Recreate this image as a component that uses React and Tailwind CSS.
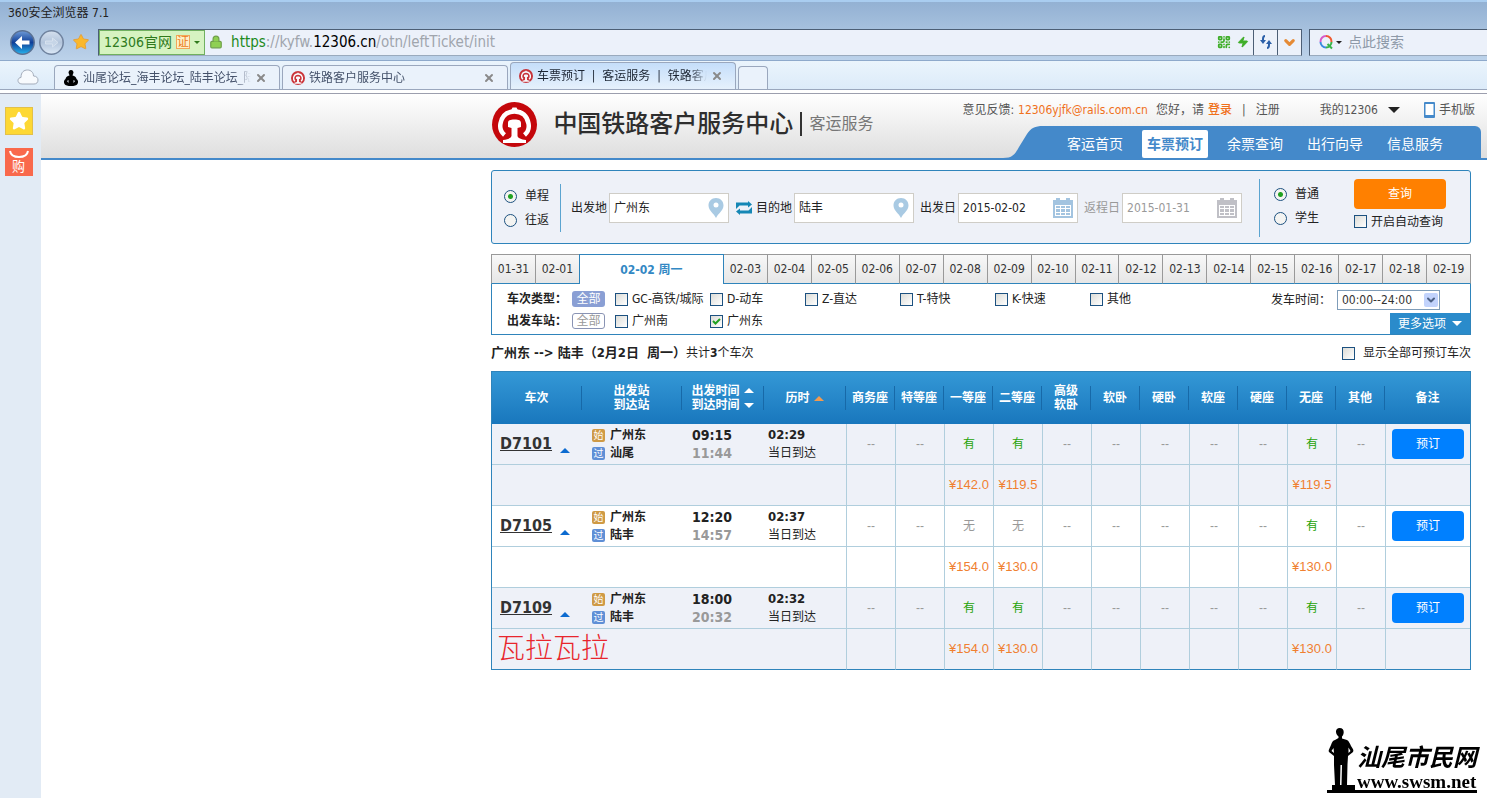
import { ChevronDown, Lock, QrCode, Star, X, Zap } from "lucide-react";

const dates = [
  "01-31", "02-01", "02-02 周一", "02-03", "02-04", "02-05", "02-06", "02-07", "02-08", "02-09",
  "02-10", "02-11", "02-12", "02-13", "02-14", "02-15", "02-16", "02-17", "02-18", "02-19",
];

const trainTypes = ["GC-高铁/城际", "D-动车", "Z-直达", "T-特快", "K-快速", "其他"];

const seats = ["商务座", "特等座", "一等座", "二等座", "高级软卧", "软卧", "硬卧", "软座", "硬座", "无座", "其他"];

const trains = [
  {
    code: "D7101", from: "广州东", to: "汕尾", depart: "09:15", arrive: "11:44", duration: "02:29",
    status: { 2: "有", 3: "有", 9: "有" },
    prices: { 2: "¥142.0", 3: "¥119.5", 9: "¥119.5" },
  },
  {
    code: "D7105", from: "广州东", to: "陆丰", depart: "12:20", arrive: "14:57", duration: "02:37",
    status: { 2: "无", 3: "无", 9: "有" },
    prices: { 2: "¥154.0", 3: "¥130.0", 9: "¥130.0" },
  },
  {
    code: "D7109", from: "广州东", to: "陆丰", depart: "18:00", arrive: "20:32", duration: "02:32",
    status: { 2: "有", 3: "有", 9: "有" },
    prices: { 2: "¥154.0", 3: "¥130.0", 9: "¥130.0" },
    note: "瓦拉瓦拉",
  },
];

function Triangle({ down, className }) {
  return (
    <svg viewBox="0 0 10 5" className={className} fill="currentColor" aria-hidden="true">
      <path d={down ? "M0 0H10L5 5Z" : "M0 5H10L5 0Z"} />
    </svg>
  );
}

function RailLogo({ className }) {
  return (
    <svg viewBox="0 0 45 45" className={className} aria-hidden="true">
      <circle cx="22.5" cy="22.5" r="22.5" fill="#c4070b" />
      <path
        d="M12.5 33C9 30 7.500 26.500 8.500 21.500C10 13.500 15 9.500 22.500 9.500S35 13.500 36.500 21.500C37.500 26.500 36 30 32.500 33"
        fill="none"
        stroke="#fff"
        strokeWidth="4.5"
      />
      <path d="M19 8.500L20.500 5.500H24.500L26 8.500Z" fill="#fff" />
      <path
        d="M16 25V21C16 18.500 18 17.500 22.500 17.500S29 18.500 29 21V25L25.500 26V34C26 36 29 37.500 34 38V41H11V38C16 37.500 19 36 19.500 34V26Z"
        fill="#fff"
      />
    </svg>
  );
}

function CheckBox({ id, label, checked, className = "" }) {
  return (
    <label htmlFor={id} className={`flex items-center gap-1 whitespace-nowrap ${className}`}>
      <span className="relative flex">
        <input
          id={id}
          type="checkbox"
          defaultChecked={checked}
          className="peer size-[13px] appearance-none border border-[#1c5180] bg-linear-to-br from-[#dcdcd7] to-white"
        />
        <svg
          viewBox="0 0 13 13"
          className="pointer-events-none absolute inset-0 hidden peer-checked:block"
          fill="none"
          stroke="#21a121"
          strokeWidth="2"
        >
          <path d="M3 6L5.500 8.500L10 4" />
        </svg>
      </span>
      {label}
    </label>
  );
}

function Radio({ id, name, label, checked }) {
  return (
    <label htmlFor={id} className="flex items-center gap-2">
      <input
        id={id}
        type="radio"
        name={name}
        defaultChecked={checked}
        className="size-[13px] appearance-none rounded-full border border-[#1c5180] bg-[#f4f4f2] checked:bg-[radial-gradient(circle,#21a121_2px,#f4f4f2_3px)]"
      />
      {label}
    </label>
  );
}

function PinIcon() {
  return (
    <svg viewBox="0 0 16 20" className="h-5 w-4 shrink-0" aria-hidden="true">
      <path
        d="M8 0C3.500 0 .5 3.200 .5 7.500C.5 12.500 6 15.500 8 20C10 15.500 15.500 12.500 15.500 7.500C15.500 3.200 12.500 0 8 0Z"
        fill="#a9cae3"
      />
      <circle cx="8" cy="7" r="2.500" fill="#fff" />
    </svg>
  );
}

function CalendarIcon({ className }) {
  return (
    <svg viewBox="0 0 20 20" className={`h-5 w-5 shrink-0 ${className}`} fill="currentColor" aria-hidden="true">
      <path d="M0 2H3V0H7V2H13V0H17V2H20V20H0Z" />
      <path d="M2 7H18V18H2Z" fill="#fff" />
      <path d="M3 8h4v2H3zM8 8h4v2H8zM13 8h4v2h-4zM3 11h4v3H3zM8 11h4v3H8zM13 11h4v3h-4zM3 15h4v2H3zM8 15h4v2H8zM13 15h4v2h-4z" />
    </svg>
  );
}

function Field({ id, label, value, muted, icon, className = "" }) {
  return (
    <div className={`flex items-center gap-0.5 ${muted ? "text-[#999]" : ""} ${className}`}>
      <label htmlFor={id} className="whitespace-nowrap">{label}</label>
      <div className="flex h-[30px] w-[120px] items-center border border-[#cfcdc7] bg-white pr-1 pl-1">
        <input id={id} defaultValue={value} className="w-full min-w-0 outline-none" />
        {icon}
      </div>
    </div>
  );
}

function BrowserTab({ icon, title, active }) {
  return (
    <div
      className={`flex w-[226px] items-center gap-1 rounded-t border border-b-0 border-[#9aa7bd] px-2 ${
        active ? "h-[27px] bg-linear-to-b from-[#c5defa] to-[#e6f1fc] text-[#1c2533]" : "h-6 bg-[#eaf2fb] text-[#44516a]"
      }`}
    >
      {icon}
      <span className="flex-1 overflow-hidden mask-r-from-90% whitespace-pre">{title}</span>
      <button aria-label="关闭标签" className="mr-1">
        <X className="size-3 text-[#8a8a8a]" strokeWidth={4} />
      </button>
    </div>
  );
}

function BrowserChrome() {
  return (
    <div>
      <div className="border-t-2 border-[#a9cdf0] bg-linear-to-b from-[#93b1d3] to-[#bcd2ea] pb-1">
        <div className="flex h-[26px] items-center px-2 pb-1 text-[#222]">360安全浏览器 7.1</div>
        <div className="flex h-7 items-center">
          <div className="mr-1.5 ml-2.5 flex items-center gap-1">
            <button aria-label="后退" className="size-[25px]">
              <svg viewBox="0 0 25 25">
                <defs>
                  <linearGradient id="back" x2="0" y2="1">
                    <stop stopColor="#6f9bd8" />
                    <stop offset=".5" stopColor="#0f3f98" />
                    <stop offset="1" stopColor="#27b4ee" />
                  </linearGradient>
                  <linearGradient id="forward" x2="0" y2="1">
                    <stop stopColor="#d5e0ee" />
                    <stop offset=".5" stopColor="#b3c5dc" />
                    <stop offset="1" stopColor="#dce9f7" />
                  </linearGradient>
                </defs>
                <circle cx="12.5" cy="12.5" r="11.7" fill="url(#back)" stroke="#5a7194" strokeWidth="1.500" />
                <path d="M5 12.500L12 6V10.500H19.500V14.500H12V19Z" fill="#fff" />
              </svg>
            </button>
            <button aria-label="前进" className="size-[25px]">
              <svg viewBox="0 0 25 25">
                <circle cx="12.5" cy="12.5" r="11.7" fill="url(#forward)" stroke="#70839f" strokeWidth="1.500" />
                <path d="M19 12.500L13.500 8V11H6.500V14H13.500V17Z" fill="#c6d5e7" stroke="#d7e2ef" />
              </svg>
            </button>
          </div>
          <button aria-label="收藏" className="mr-2 ml-0.5">
            <Star className="size-[18px] fill-[#fbb82c] text-[#e6982a]" strokeWidth={1} />
          </button>
          <div className="flex h-[27px] flex-1 items-center border border-t-[#4c5e75] border-r-[#4c5e75] border-b-[#9aaabd] border-l-[#4c5e75] bg-[#ecf1fa]">
            <button className="flex h-full items-center gap-1 border border-[#70b060] bg-[#d6f3c1] px-1 text-[14px] whitespace-nowrap text-[#2f7a1d]">
              12306官网
              <span className="border border-[#f2a65a] bg-[#fdf0c8] text-[12px] leading-3 text-[#ec7c1c]">证</span>
              <Triangle down className="h-[3px] w-1.5" />
            </button>
            <Lock className="mx-1 size-[14px] fill-[#8fd052] text-[#6f9f4a]" strokeWidth={2} />
            <span className="ml-1 flex-1 text-[15px] text-[#a0a5ad]">
              <span className="text-[#1d8a1d]">https</span>://kyfw.<span className="text-black">12306.cn</span>/otn/leftTicket/init
            </span>
            <QrCode className="mr-1.5 size-[14px] text-[#3fae29]" strokeWidth={3} />
            <Zap className="mr-1 size-3 fill-[#3fae29] text-[#3fae29]" />
            <button aria-label="刷新" className="flex h-full w-6 items-center justify-center border-l border-[#4c5e75]">
              <svg viewBox="0 0 14 14" className="size-[14px]" fill="none" stroke="#2b5fa8" strokeWidth="2">
                <path d="M6 1Q4 1 4 4V6M8 13Q10 13 10 10V8" />
                <path d="M1 5H7L4 9ZM7 9H13L10 5Z" fill="#2b5fa8" stroke="none" />
              </svg>
            </button>
            <button aria-label="展开" className="flex h-full w-6 items-center justify-center border-l border-[#4c5e75]">
              <ChevronDown className="size-[15px] text-[#e58a35]" strokeWidth={5} />
            </button>
          </div>
          <div className="ml-[7px] flex h-[27px] w-[178px] items-center border border-r-0 border-t-[#4c5e75] border-b-[#9aaabd] border-l-[#4c5e75] bg-[#ecf1fa] pl-2">
            <svg viewBox="0 0 16 16" className="size-4 shrink-0" fill="none" strokeWidth="2">
              <path d="M8 2A5.500 5.500 0 0 1 13.500 8" stroke="#ef5a30" />
              <path d="M8 2A5.500 5.500 0 0 0 2.500 8" stroke="#d65bc8" />
              <path d="M2.500 8A5.500 5.500 0 0 0 8 13.500" stroke="#3a8be0" />
              <path d="M13.500 8A5.500 5.500 0 0 1 8 13.500M9.500 10L14 14.500" stroke="#39b54a" />
            </svg>
            <Triangle down className="mr-1.5 ml-0.5 h-[3px] w-1.5 shrink-0" />
            <input aria-label="搜索" placeholder="点此搜索" className="w-full min-w-0 text-[14px] outline-none placeholder:text-[#8e99a8]" />
          </div>
        </div>
      </div>
      <div className="flex h-[30px] items-end border-t border-b border-t-[#8ea9cb] border-b-[#9aa7bd] bg-linear-to-b from-[#eaf4fc] to-[#dcebf9]">
        <div className="w-[54px] shrink-0 pb-1 pl-[17px]">
          <svg viewBox="0 0 22 16" className="h-4 w-[22px]" fill="#f7fafd" stroke="#a3acba" aria-hidden="true">
            <path d="M5 15C2 15 1 13 1 11.500C1 9.500 2.500 8.500 4 8.500C4 3 7 1 10.500 1C14 1 16.500 3.500 16.500 7C19.500 7 21 9 21 11C21 13.500 19.500 15 17 15Z" />
          </svg>
        </div>
        <div className="flex items-end gap-0.5">
          <BrowserTab
            title="汕尾论坛_海丰论坛_陆丰论坛_陆"
            icon={
              <svg viewBox="0 0 16 16" className="size-4 shrink-0">
                <path
                  d="M8 0A2.500 2.500 0 0 1 10 4L9.500 5.500Q13 6 13.500 9Q16 11 14.500 14Q13 16 8 16T1.500 14Q0 11 2.500 9Q3 6 6.500 5.500L6 4A2.500 2.500 0 0 1 8 0Z"
                  fill="#000"
                />
                <path d="M4 11L5.500 10V13ZM12 11L10.500 10V13Z" fill="#eaf2fb" />
              </svg>
            }
          />
          <BrowserTab title="铁路客户服务中心" icon={<RailLogo className="size-[14px] shrink-0 opacity-80" />} />
          <BrowserTab
            active
            title="车票预订  |  客运服务  |  铁路客户"
            icon={<RailLogo className="size-[14px] shrink-0 opacity-80" />}
          />
          <button aria-label="新标签" className="h-[23px] w-[30px] rounded-t border border-b-0 border-[#9aa7bd] bg-[#eaf2fb]" />
        </div>
      </div>
      <div className="h-1 border-b border-[#9c9fae] bg-white" />
    </div>
  );
}

function SiteHeader() {
  return (
    <header className="flex justify-between border-b-2 border-[#4489ca] bg-linear-to-b from-white to-[#dedede]">
      <div className="ml-auto flex w-[470px] items-center pb-1">
        <RailLogo className="mr-4 size-[45px] shrink-0" />
        <h1 className="text-[24px] font-medium whitespace-nowrap text-[#2e2e2e]">中国铁路客户服务中心</h1>
        <span className="mx-[7px] h-6 border-l-2 border-[#333]" />
        <span className="text-[16px] whitespace-nowrap text-[#777]">客运服务</span>
      </div>
      <div className="flex flex-col items-end">
        <div className="flex h-8 items-center pr-3 whitespace-nowrap text-[#555]">
          意见反馈:
          <a href="#mail" className="ml-1 text-[#f0711c]">12306yjfk@rails.com.cn</a>
          <span className="ml-2">您好，请</span>
          <a href="#login" className="ml-1 font-medium text-[#f0711c]">登录</a>
          <span className="mx-2.5">|</span>
          <a href="#register">注册</a>
          <button className="ml-10 flex items-center gap-2.5">
            我的12306
            <Triangle down className="h-1.5 w-3 text-[#222]" />
          </button>
          <a href="#mobile" className="ml-6 flex items-center gap-1">
            <svg viewBox="0 0 11 16" className="h-4 w-[11px]">
              <rect width="11" height="16" rx="1" fill="#4489ca" />
              <path d="M1.500 2H9.500V13H1.500Z" fill="#fff" />
            </svg>
            手机版
          </a>
        </div>
        <div className="mr-1.5 flex">
          <svg viewBox="0 0 40 32" className="h-8 w-10" fill="#4489ca" aria-hidden="true">
            <path d="M0 32C10 32 12 28 16 21L24 8C28 2 32 0 40 0V32Z" />
          </svg>
          <nav className="-ml-px flex h-8 items-end rounded-tr-md bg-[#4489ca] pr-[26px] pl-[13px] text-[14px] leading-7 text-white">
            <a href="#home" className="w-20 text-center">客运首页</a>
            <span className="flex w-20 justify-center">
              <a href="#booking" className="w-[66px] rounded-xs bg-white text-center font-bold text-[#4489ca]">
                车票预订
              </a>
            </span>
            <a href="#remaining" className="w-20 text-center">余票查询</a>
            <a href="#guide" className="w-20 text-center">出行向导</a>
            <a href="#info" className="w-20 text-center">信息服务</a>
          </nav>
        </div>
      </div>
    </header>
  );
}

function SearchPanel() {
  return (
    <form className="flex h-[74px] items-center rounded-[3px] border border-[#2f84bb] bg-[#eef1f8] pt-0.5 pl-3">
      <div className="flex flex-col gap-1.5 leading-[18px]">
        <Radio id="one-way" name="trip" label="单程" checked />
        <Radio id="round" name="trip" label="往返" />
      </div>
      <div className="mr-2.5 ml-[11px] h-12 border-l border-[#5ba4d0]" />
      <Field id="from" label="出发地" value="广州东" icon={<PinIcon />} />
      <button type="button" aria-label="交换" className="mr-1 ml-[7px]">
        <svg viewBox="0 0 16 14" className="h-[14px] w-4" fill="#1587b5">
          <path d="M0 8V1.500H12V0L16 3.500L12 6.500V4.500H3.500L0 8ZM16 6V12.500H4V14L0 10.500L4 7.500V9.500H12.500L16 6Z" />
        </svg>
      </button>
      <Field id="to" label="目的地" value="陆丰" icon={<PinIcon />} />
      <Field id="depart" label="出发日" value="2015-02-02" className="ml-1.5" icon={<CalendarIcon className="text-[#a3c4e0]" />} />
      <Field id="return" label="返程日" value="2015-01-31" className="ml-1.5" muted icon={<CalendarIcon className="text-[#c0c0c6]" />} />
      <div className="mr-3.5 ml-auto h-[58px] border-l border-[#5ba4d0]" />
      <div className="flex flex-col gap-1.5 pb-1 leading-[18px]">
        <Radio id="normal" name="passenger" label="普通" checked />
        <Radio id="student" name="passenger" label="学生" />
      </div>
      <div className="mr-6 ml-[35px] flex flex-col gap-[5px] pb-2">
        <button type="button" className="h-[30px] w-[92px] rounded bg-[#ff8000] text-white">查询</button>
        <CheckBox id="auto" label="开启自动查询" />
      </div>
    </form>
  );
}

function DateTabs() {
  return (
    <div className="flex text-[#333]">
      {dates.map((date, i) => (
        <button
          key={date}
          className={
            i === 2
              ? "h-[30px] w-[145px] border-t border-r border-l border-[#2f84bb] bg-white font-bold text-[#3388c4]"
              : `h-[30px] min-w-0 flex-1 border-t border-b border-t-[#999] border-b-[#2f84bb] bg-linear-to-b from-[#f8f8f8] to-[#e6e6e6] ${
                  i === 3 ? "" : "border-l border-l-[#999]"
                } ${i === dates.length - 1 ? "border-r border-r-[#999]" : ""}`
          }
        >
          {date}
        </button>
      ))}
    </div>
  );
}

function Filters() {
  return (
    <div className="flex justify-between border border-t-0 border-[#2f84bb]">
      <div className="flex flex-col gap-1 pt-[6px] pl-[15px]">
        <div className="flex h-[18px] items-center">
          <span className="w-[65px] font-bold whitespace-nowrap">车次类型：</span>
          <button className="mr-2.5 h-4 w-[33px] rounded-[3px] bg-[#8a9fd4] leading-4 text-white">全部</button>
          {trainTypes.map((type, i) => (
            <CheckBox key={type} id={`type-${i}`} label={type} className="w-[95px]" />
          ))}
        </div>
        <div className="flex h-[18px] items-center">
          <span className="w-[65px] font-bold whitespace-nowrap">出发车站：</span>
          <button className="mr-2.5 h-4 w-[33px] rounded-[3px] border border-[#8a94b4] leading-[14px] text-[#999]">全部</button>
          <CheckBox id="gz-south" label="广州南" className="w-[95px]" />
          <CheckBox id="gz-east" label="广州东" className="w-[95px]" checked />
        </div>
      </div>
      <div className="flex flex-col items-end gap-[3px] pt-[6px]">
        <div className="flex items-center pr-[30px]">
          <label htmlFor="time" className="mr-1.5 whitespace-nowrap">发车时间：</label>
          <div className="relative">
            <select
              id="time"
              className="block h-5 w-[103px] appearance-none border border-[#7f9db9] bg-white pl-1 text-[#333]"
            >
              <option>00:00--24:00</option>
              <option>00:00--06:00</option>
              <option>06:00--12:00</option>
              <option>12:00--18:00</option>
              <option>18:00--24:00</option>
            </select>
            <span className="pointer-events-none absolute top-[3px] right-0.5 flex h-[14px] w-[14px] items-center justify-center rounded-xs bg-[#c2d3fc]">
              <ChevronDown className="size-3 text-[#4d6185]" strokeWidth={4} />
            </span>
          </div>
        </div>
        <button className="flex h-[21px] w-20 items-center justify-center gap-1.5 bg-[#2a8bcb] text-white">
          更多选项
          <Triangle down className="h-[5px] w-2.5" />
        </button>
      </div>
    </div>
  );
}

function HeadCell({ children, last }) {
  return (
    <th className="h-[52px] p-0">
      <div className={`flex h-6 items-center justify-center gap-1 leading-[14px] ${last ? "" : "border-r border-[#1769a8]"}`}>
        {children}
      </div>
    </th>
  );
}

function SeatStatus({ value }) {
  if (!value) return <span className="font-['Liberation_Sans',sans-serif] text-[#999]">--</span>;
  return <span className={value === "有" ? "text-[#26a306]" : "text-[#999]"}>{value}</span>;
}

function TrainRows({ train, striped, last }) {
  const bg = striped ? "bg-[#eef1f8]" : "bg-white";
  const cell = "border-b border-l border-[#b0cedd] p-0 text-center";
  const edge = last ? "border-b-[#2f84bb]" : "";

  return (
    <tbody className={bg}>
      <tr className="h-[41px]">
        <td className="border-b border-[#b0cedd] p-0 pl-2">
          <div className="flex items-end gap-2">
            <a href={`#${train.code}`} className="text-[16px] leading-5 font-bold text-[#333] underline">{train.code}</a>
            <Triangle className="mb-px h-[5px] w-2.5 text-[#0c6bd0]" />
          </div>
        </td>
        <td className="border-b border-[#b0cedd] p-0 pl-2.5 leading-[18px] font-bold">
          <div className="flex items-center gap-[5px]">
            <span className="size-[13px] rounded-xs bg-[#cf9a45] text-center text-[10px] leading-[13px] font-normal text-white">始</span>
            {train.from}
          </div>
          <div className="flex items-center gap-[5px]">
            <span className="size-[13px] rounded-xs bg-[#5f8fd6] text-center text-[10px] leading-[13px] font-normal text-white">过</span>
            {train.to}
          </div>
        </td>
        <td className="border-b border-[#b0cedd] p-0 pl-2.5 text-[14px] leading-[18px] font-bold">
          <div>{train.depart}</div>
          <div className="text-[#999]">{train.arrive}</div>
        </td>
        <td className="border-b border-[#b0cedd] p-0 pl-1 leading-[18px]">
          <div className="text-[13px] font-bold">{train.duration}</div>
          <div>当日到达</div>
        </td>
        {seats.map((seat, i) => (
          <td key={seat} className={cell}>
            <SeatStatus value={train.status[i]} />
          </td>
        ))}
        <td className={cell}>
          <button className="mx-auto block h-[30px] w-[72px] rounded bg-[#0080ff] text-white">预订</button>
        </td>
      </tr>
      <tr className="h-[41px]">
        <td colSpan={4} className={`border-b border-[#b0cedd] p-0 pl-[5px] text-[28px] leading-9 font-light text-[#e8262d] ${edge}`}>
          {train.note}
        </td>
        {seats.map((seat, i) => (
          <td key={seat} className={`${cell} ${edge} font-['Liberation_Sans',sans-serif] text-[13px] text-[#f08030]`}>
            {train.prices[i]}
          </td>
        ))}
        <td className={`${cell} ${edge}`} />
      </tr>
    </tbody>
  );
}

function TrainTable() {
  return (
    <table className="w-full table-fixed border-separate border-spacing-0 border border-b-0 border-[#2f84bb]">
      <colgroup>
        <col className="w-[90px]" />
        <col className="w-[100px]" />
        <col className="w-[82px]" />
        <col className="w-[82px]" />
        {seats.map((seat) => (
          <col key={seat} className="w-[49px]" />
        ))}
        <col />
      </colgroup>
      <thead className="bg-linear-to-b from-[#3498d6] to-[#1877bd] text-white">
        <tr>
          <HeadCell>车次</HeadCell>
          <HeadCell>出发站<br />到达站</HeadCell>
          <HeadCell>
            <span>出发时间<br />到达时间</span>
            <span className="flex flex-col gap-2.5">
              <Triangle className="h-[5px] w-2.5" />
              <Triangle down className="h-[5px] w-2.5" />
            </span>
          </HeadCell>
          <HeadCell>
            历时
            <Triangle className="h-[5px] w-2.5 text-[#f39a4e]" />
          </HeadCell>
          {seats.map((seat) => (
            <HeadCell key={seat}>
              {seat.length === 4 ? <span>{seat.slice(0, 2)}<br />{seat.slice(2)}</span> : seat}
            </HeadCell>
          ))}
          <HeadCell last>备注</HeadCell>
        </tr>
      </thead>
      {trains.map((train, i) => (
        <TrainRows key={train.code} train={train} striped={i % 2 === 0} last={i === trains.length - 1} />
      ))}
    </table>
  );
}

function Watermark() {
  return (
    <div className="fixed right-2.5 bottom-[5px] flex items-end border-b-[3px] border-black text-black">
      <svg viewBox="0 0 30 63" className="h-[63px] w-[30px]" aria-hidden="true">
        <path
          fillRule="evenodd"
          d="M12.500 1C15.500 1 17 3 16.700 5.500C16.500 8 15.500 9 15 9.500V11.500L20 13C22 14 23 17 24 19C26 22 27 23 26 25L21 29L20.500 37L20 58H28V63H5V58H8L7 38V29L2 25C1 23 3 21 4 18C5 15 6 13.500 8 13L11.500 11V9.500C9.500 8 9 6 9 4.500C9 2.500 10.500 1 12.500 1ZM6.500 21L4.500 24L7 26ZM21.500 20.500V26L23.500 24ZM13.500 38L13 58H14.500L15 38Z"
        />
      </svg>
      <div>
        <div className="text-[24px] leading-6 font-bold italic">汕尾市民网</div>
        <div className="pt-1 font-['Liberation_Serif',serif] text-[19px] leading-4 font-bold">www.swsm.net</div>
      </div>
    </div>
  );
}

export default function App() {
  return (
    <div className="flex min-h-screen flex-col bg-white font-['DejaVu_Sans_Condensed','Noto_Sans_CJK_SC',sans-serif] text-[12px] leading-4 text-[#222]">
      <BrowserChrome />
      <div className="flex flex-1">
        <aside className="flex w-[41px] shrink-0 flex-col items-center gap-[13px] bg-[#e2ebf5] pt-[13px] pr-1">
          <button aria-label="收藏夹" className="flex size-7 items-center justify-center border border-[#e2c04a] bg-[#fdd835]">
            <Star className="size-5 fill-white text-white" />
          </button>
          <button aria-label="购物" className="relative size-7 bg-[#f9694c] pt-2.5 text-[13px] text-white">
            购
            <svg viewBox="0 0 28 12" className="absolute inset-x-0 top-0" fill="none" stroke="#fff" strokeWidth="2">
              <path d="M5 3Q6 9 14 9T23 3" />
            </svg>
          </button>
        </aside>
        <div className="min-w-0 flex-1">
          <SiteHeader />
          <main className="mt-2.5 mr-4 ml-auto max-w-[980px]">
            <SearchPanel />
            <div className="mt-2.5">
              <DateTabs />
              <Filters />
            </div>
            <div className="flex h-9 items-center justify-between">
              <p className="whitespace-pre">
                <b className="text-[13px]">{"广州东 --> 陆丰（2月2日  周一）"}</b>共计<b>3</b>个车次
              </p>
              <CheckBox id="bookable" label="显示全部可预订车次" className="gap-2" />
            </div>
            <TrainTable />
          </main>
        </div>
      </div>
      <Watermark />
    </div>
  );
}
